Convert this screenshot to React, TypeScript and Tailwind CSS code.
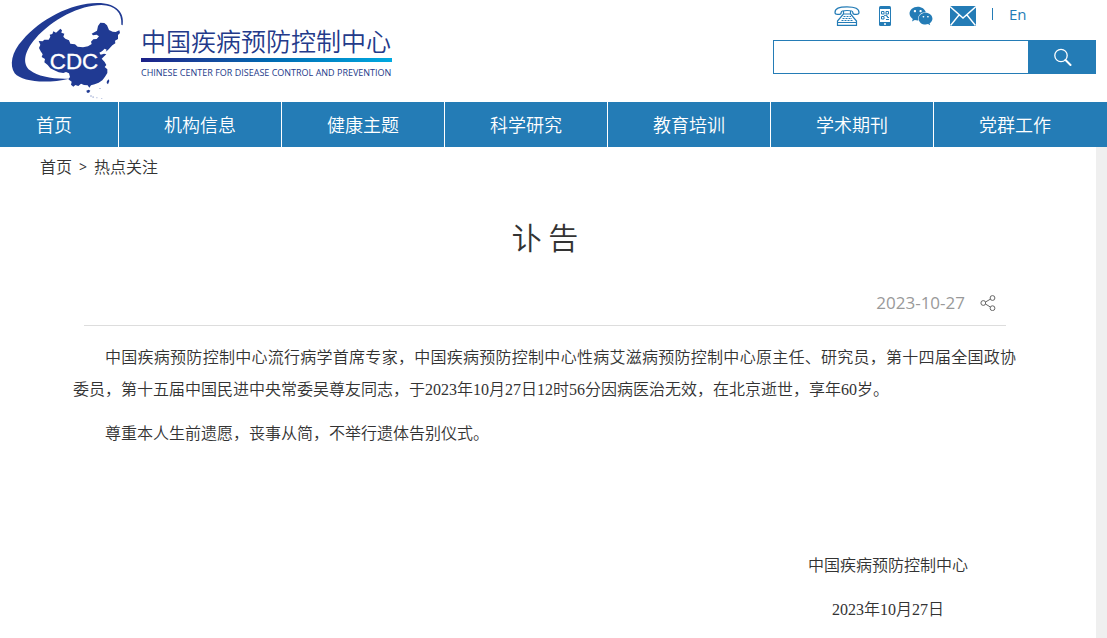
import clsx from "clsx";
import { FaWeixin } from "react-icons/fa6";

const navItems = [
  "首页",
  "机构信息",
  "健康主题",
  "科学研究",
  "教育培训",
  "学术期刊",
  "党群工作",
];

const Emblem = () => (
  <svg
    viewBox="0 0 405 315"
    className="h-[105px] w-[135px] shrink-0"
    role="img"
    aria-label="CDC"
  >
    <path
      d="M368 76C374 40 352 9 292 9C212 9 118 60 68 120C34 156 28 196 44 220C66 246 140 252 208 236C160 238 114 230 90 211C66 192 72 154 106 116C156 58 240 15 304 15C346 16 366 38 364 74Z"
      fill="#203a93"
    />
    <path
      d="M116 123L128 124L133 119L146 119L151 110L149 104L157 102L160 94L168 98L174 93L181 86L186 91L184 98L193 101L190 110L196 116L207 121L211 131L225 133L233 140L249 142L264 139L275 132L273 125L280 118L290 117L297 109L290 104L279 106L275 101L283 97L291 92L294 78L301 68L313 69L321 76L327 90L338 95L347 96L358 91L360 99L354 105L354 117L345 122L346 130L337 136L324 150L317 155L320 149L314 146L306 154L298 158L302 164L312 161L319 163L311 170L305 176L314 186L319 195L314 201L322 208L322 219L315 230L307 241L296 248L284 253L273 256L268 263L263 256L252 255L243 251L235 258L226 255L220 260L213 254L215 245L205 238L210 231L207 220L198 216L190 219L176 217L163 211L151 205L143 195L133 187L135 177L125 171L128 163L122 154L117 144L121 134Z"
      fill="#203a93"
    />
    <path d="M259 272L266 269L271 272L267 278L261 278Z" fill="#203a93" />
    <path d="M321 243L326 238L328 243L324 253L320 249Z" fill="#203a93" />
    <path
      d="M270 286h6v4h-6zM277 289h5v5h-5zM288 292h5v3h-5zM303 294h4v3h-4zM297 264h6v3h-6z"
      fill="#c3cce4"
    />
    <text
      x="222"
      y="206"
      textAnchor="middle"
      fontSize="67"
      className="fill-white stroke-white stroke-1 font-['Liberation_Sans',sans-serif]"
    >
      CDC
    </text>
  </svg>
);

const PhoneIcon = () => (
  <svg
    viewBox="0 0 26 20"
    className="h-5 w-[26px]"
    fill="none"
    stroke="#247cb6"
    strokeWidth="1.2"
  >
    <path d="M1 6.500C1 2.500 5 .8 13 .8S25 2.500 25 6.500C25 8 24 8.300 22.500 8.300H20.500C19 8.300 18.700 7.500 18.700 6C18.700 4.800 17.500 4.500 13 4.500S7.300 4.800 7.300 6C7.300 7.500 7 8.300 5.500 8.300H3.500C2 8.300 1 8 1 6.500Z" />
    <path d="M9.500 5V8L3.500 15V19.300H22.500V15L16.500 8V5M9.500 8H16.500M3.500 16.500H22.500" />
    <path
      d="M9.500 10.500H17M8.500 12.500H18M7.500 14.500H18.500"
      strokeDasharray="2 1"
    />
  </svg>
);

const MobileIcon = () => (
  <svg viewBox="0 0 12 20" className="h-5 w-3">
    <rect width="12" height="20" rx="1.5" fill="#247cb6" />
    <path d="M1 3H11V16H1Z" fill="white" />
    <path
      d="M2.500 5.500H5V8H2.500ZM7 5.500H9.500V8H7ZM2.500 10.500H5V13H2.500ZM7 10H8.500V11.500H10M7 13.500H10M5 9.300H8"
      fill="none"
      stroke="#247cb6"
    />
    <circle cx="6" cy="18" r="1" fill="white" />
  </svg>
);

const MailIcon = () => (
  <svg viewBox="0 0 26 20" className="h-5 w-[26px]">
    <rect width="26" height="20" fill="#247cb6" />
    <path
      d="M0 .5L13 12L26 .5M.5 19.500L9 9M25.500 19.500L17 9"
      fill="none"
      stroke="white"
      strokeWidth="1.4"
    />
  </svg>
);

const SearchIcon = () => (
  <svg
    viewBox="0 0 18 18"
    className="size-[18px]"
    fill="none"
    stroke="white"
    strokeLinecap="round"
  >
    <circle cx="7" cy="7.500" r="6.200" strokeWidth="1.3" />
    <path d="M11.500 12L16.500 17" strokeWidth="2" />
  </svg>
);

const ShareIcon = () => (
  <svg viewBox="0 0 16 16" className="size-4" fill="none" stroke="#666">
    <circle cx="3.300" cy="8" r="2.400" />
    <circle cx="12.500" cy="3" r="2.400" />
    <circle cx="12.500" cy="13.200" r="2.400" />
    <path d="M5.500 7L10.300 4.200M5.500 9L10.300 12" />
  </svg>
);

const Header = () => (
  <header className="flex items-start justify-between pr-[11px]">
    <div className="flex h-[102px]">
      <Emblem />
      <div className="ml-1.5 pt-6 text-[#233a8a]">
        <div className="text-[25px] leading-[34px] whitespace-nowrap">
          中国疾病预防控制中心
        </div>
        <div className="h-1 w-[251px] bg-linear-to-r from-[#1c2088] via-[#0068b0] to-[#00a9e0]" />
        <div className="mt-[3px] text-[9px] leading-4 font-normal whitespace-nowrap">
          CHINESE CENTER FOR DISEASE CONTROL AND PREVENTION
        </div>
      </div>
    </div>
    <div className="w-[323px] pt-1.5">
      <div className="flex h-5 items-center pl-[61px] text-[#247cb6]">
        <a href="#phone" aria-label="电话">
          <PhoneIcon />
        </a>
        <a href="#mobile" aria-label="手机版" className="ml-[19px]">
          <MobileIcon />
        </a>
        <a href="#wechat" aria-label="微信" className="ml-[18px]">
          <FaWeixin className="size-6" />
        </a>
        <a href="#mail" aria-label="邮箱" className="ml-[17px]">
          <MailIcon />
        </a>
        <span className="mb-1 ml-4 h-3 w-px bg-[#247cb6]" />
        <a href="#en" className="mb-1 ml-4 text-[15px] leading-5 font-normal">
          En
        </a>
      </div>
      <form className="mt-3.5 flex h-[34px]">
        <input
          type="text"
          aria-label="搜索"
          className="min-w-0 flex-1 border border-[#247cb6] px-2 outline-none"
        />
        <button
          type="button"
          aria-label="搜索"
          className="flex w-[67px] items-center justify-center bg-[#247cb6]"
        >
          <SearchIcon />
        </button>
      </form>
    </div>
  </header>
);

const Nav = () => (
  <nav className="flex h-[45px] bg-[#247cb6] pr-[11px] text-lg text-white">
    {navItems.map((item, i) => (
      <a
        key={item}
        href="#nav"
        className={clsx(
          "flex items-center",
          i === 0 ? "w-[119px] pl-9" : "flex-1 justify-center",
          i < navItems.length - 1 && "border-r border-white"
        )}
      >
        {item}
      </a>
    ))}
  </nav>
);

export default function App() {
  return (
    <div className="flex min-h-screen flex-col bg-white font-['Open_Sans','Noto_Sans_CJK_SC',sans-serif] font-[350] text-[#333]">
      <Header />
      <Nav />
      <div className="flex flex-1 bg-[#efefef] pr-[11px]">
        <main className="flex-1 bg-white pt-2">
          <div className="flex items-center gap-[7px] pl-10 text-base leading-6">
            <a href="#home">首页</a>
            <span className="text-sm font-normal">&gt;</span>
            <a href="#news">热点关注</a>
          </div>
          <article>
            <h1 className="mt-[33px] pr-1.5 text-center font-['Noto_Sans_CJK_SC',sans-serif] text-[30px] leading-12 font-[350]">
              讣 告
            </h1>
            <div className="mr-[90px] ml-[84px] flex h-[66px] items-center justify-end gap-[15px] border-b border-[#ddd] pt-5 pr-2.5 text-[17px] font-normal text-[#999]">
              <time dateTime="2023-10-27">2023-10-27</time>
              <button type="button" aria-label="分享">
                <ShareIcon />
              </button>
            </div>
            <div className="mr-20 ml-[73px] flex flex-col gap-3 pt-4 font-['Liberation_Serif','Noto_Sans_CJK_SC',serif] text-base leading-8">
              <p className="text-justify indent-8">
                中国疾病预防控制中心流行病学首席专家，中国疾病预防控制中心性病艾滋病预防控制中心原主任、研究员，第十四届全国政协委员，第十五届中国民进中央常委吴尊友同志，于2023年10月27日12时56分因病医治无效，在北京逝世，享年60岁。
              </p>
              <p className="indent-8">
                尊重本人生前遗愿，丧事从简，不举行遗体告别仪式。
              </p>
              <div className="mt-[88px] mr-12 flex flex-col gap-3 self-end text-center">
                <p>中国疾病预防控制中心</p>
                <p>2023年10月27日</p>
              </div>
            </div>
          </article>
        </main>
      </div>
    </div>
  );
}
